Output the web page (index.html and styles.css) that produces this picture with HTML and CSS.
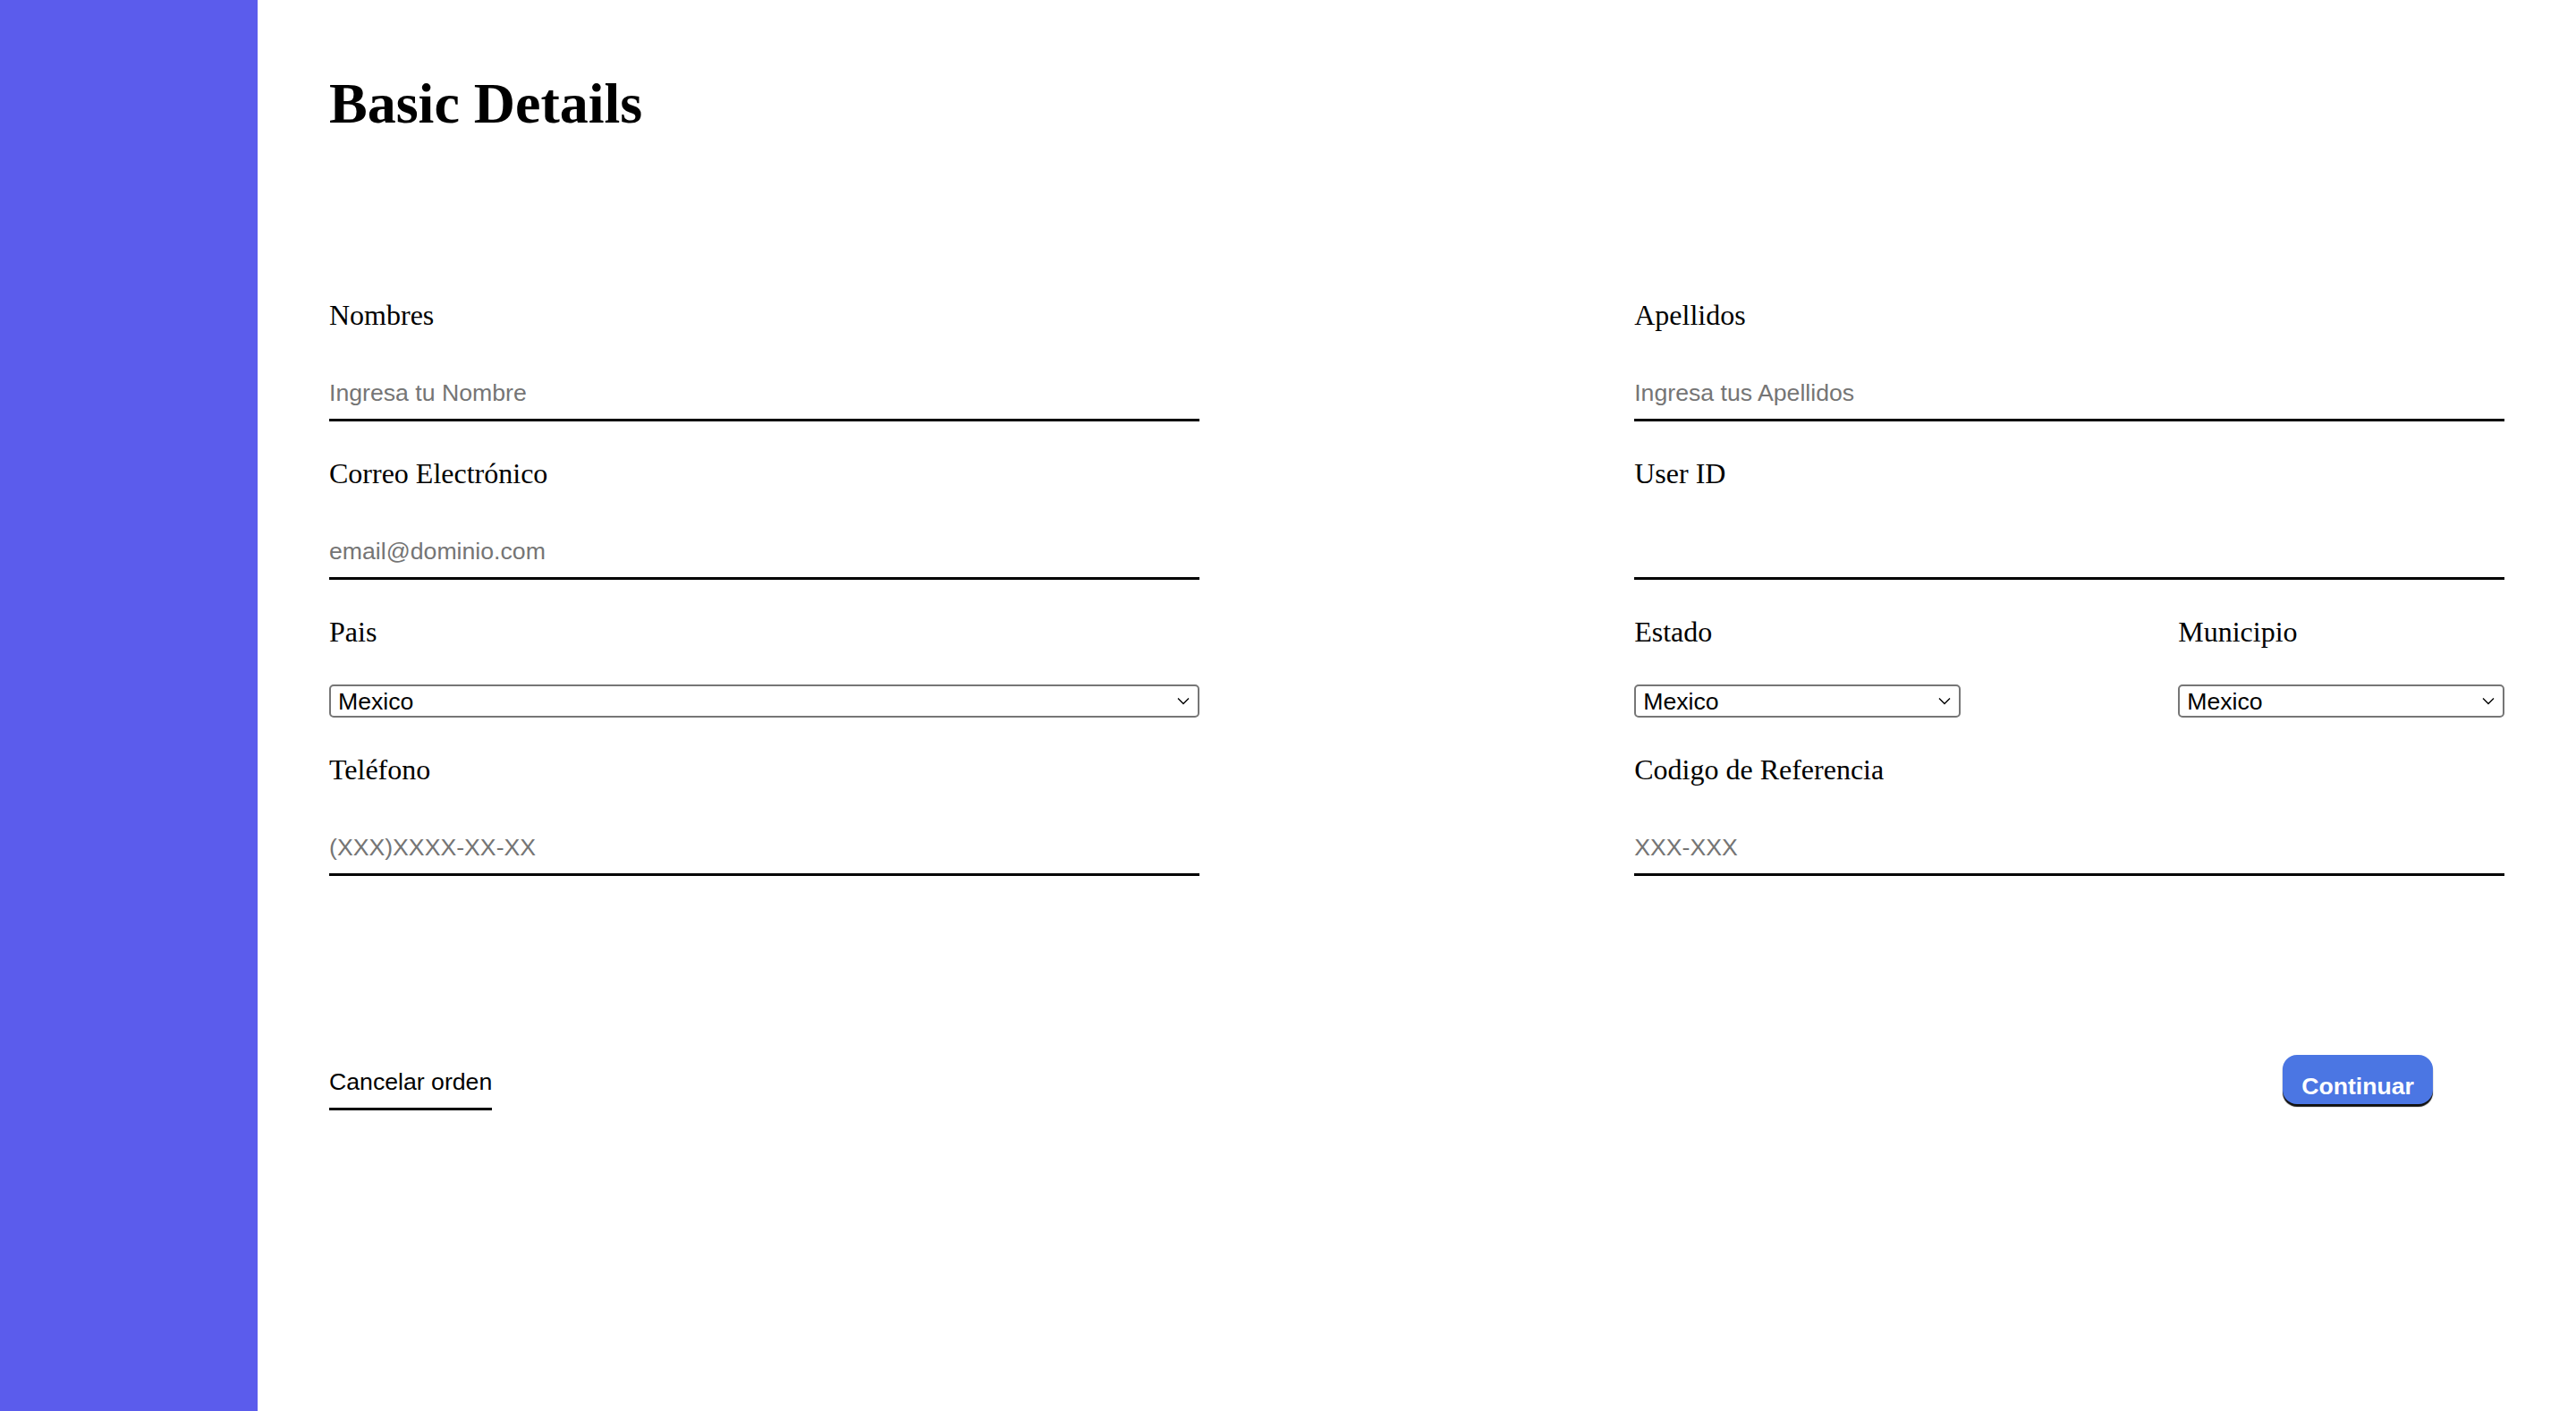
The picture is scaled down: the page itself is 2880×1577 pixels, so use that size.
FILE: index.html
```html
<!DOCTYPE html>
<html lang="es">
<head>
<meta charset="utf-8">
<title>Basic Details</title>
<link rel="stylesheet" href="styles.css">
</head>
<body>
  <aside class="sidebar"></aside>
  <main class="main">
    <h1 class="title">Basic Details</h1>
    <form class="form">
      <div class="field">
        <label class="label" for="nombres">Nombres</label>
        <input class="input" id="nombres" type="text" placeholder="Ingresa tu Nombre">
      </div>
      <div class="field">
        <label class="label" for="apellidos">Apellidos</label>
        <input class="input" id="apellidos" type="text" placeholder="Ingresa tus Apellidos">
      </div>
      <div class="field">
        <label class="label" for="correo">Correo Electrónico</label>
        <input class="input" id="correo" type="email" placeholder="email@dominio.com">
      </div>
      <div class="field">
        <label class="label" for="userid">User ID</label>
        <input class="input" id="userid" type="text">
      </div>
      <div class="field">
        <label class="label" for="pais">Pais</label>
        <div class="select-wrap">
          <select class="select" id="pais"><option>Mexico</option></select>
          <svg class="chevron" viewBox="0 0 14 9" aria-hidden="true"><path d="M1 1.5 L7 7.5 L13 1.5" fill="none" stroke="#000" stroke-width="1.4"/></svg>
        </div>
      </div>
      <div class="split">
        <div class="field field-small">
          <label class="label" for="estado">Estado</label>
          <div class="select-wrap">
            <select class="select" id="estado"><option>Mexico</option></select>
            <svg class="chevron" viewBox="0 0 14 9" aria-hidden="true"><path d="M1 1.5 L7 7.5 L13 1.5" fill="none" stroke="#000" stroke-width="1.4"/></svg>
          </div>
        </div>
        <div class="field field-small">
          <label class="label" for="municipio">Municipio</label>
          <div class="select-wrap">
            <select class="select" id="municipio"><option>Mexico</option></select>
            <svg class="chevron" viewBox="0 0 14 9" aria-hidden="true"><path d="M1 1.5 L7 7.5 L13 1.5" fill="none" stroke="#000" stroke-width="1.4"/></svg>
          </div>
        </div>
      </div>
      <div class="field">
        <label class="label" for="telefono">Teléfono</label>
        <input class="input" id="telefono" type="tel" placeholder="(XXX)XXXX-XX-XX">
      </div>
      <div class="field">
        <label class="label" for="codigo">Codigo de Referencia</label>
        <input class="input" id="codigo" type="text" placeholder="XXX-XXX">
      </div>
    </form>
    <div class="actions">
      <button class="btn-cancel" type="button">Cancelar orden</button>
      <button class="btn-continue" type="button">Continuar</button>
    </div>
  </main>
</body>
</html>
```

FILE: styles.css
```css
* {
  box-sizing: border-box;
}

html, body {
  margin: 0;
  padding: 0;
  height: 100%;
  background: #ffffff;
}

body {
  display: flex;
  min-height: 1577px;
  font-family: "Liberation Serif", "Times New Roman", serif;
  color: #000;
}

.sidebar {
  width: 288px;
  flex: 0 0 288px;
  background: #5b5cec;
}

.main {
  flex: 1;
  padding: 79px 80px 0 80px;
}

.title {
  margin: 0 0 181px 0;
  font-size: 64px;
  font-weight: bold;
  line-height: normal;
}

.form {
  display: grid;
  grid-template-columns: 40% 40%;
  justify-content: space-between;
  row-gap: 40px;
}

.field {
  display: flex;
  flex-direction: column;
}

.label {
  font-size: 32px;
  line-height: normal;
  margin-bottom: 40px;
}

.input {
  width: 100%;
  border: none;
  border-bottom: 3px solid #000;
  outline: none;
  background: transparent;
  padding: 13px 0 13px 0;
  font-family: "Liberation Sans", Arial, sans-serif;
  font-size: 26.67px;
  line-height: normal;
  color: #000;
}

.input::placeholder {
  color: #757575;
}

.select-wrap {
  position: relative;
  width: 100%;
}

.select {
  display: block;
  width: 100%;
  height: 37px;
  border: 2px solid #767676;
  border-radius: 5px;
  background: #fff;
  padding: 0 40px 0 8px;
  font-family: "Liberation Sans", Arial, sans-serif;
  font-size: 26.67px;
  color: #000;
  -webkit-appearance: none;
  appearance: none;
}

.chevron {
  position: absolute;
  right: 11px;
  top: 14px;
  width: 14px;
  height: 9px;
  pointer-events: none;
}

.split {
  display: flex;
  justify-content: space-between;
}

.field-small {
  width: 37.5%;
}

.actions {
  margin-top: 200px;
  display: flex;
  justify-content: space-between;
  align-items: flex-end;
}

.btn-cancel {
  background: none;
  border: none;
  border-bottom: 3px solid #000;
  padding: 0 0 13px 0;
  font-family: "Liberation Sans", Arial, sans-serif;
  font-size: 26.67px;
  line-height: normal;
  color: #000;
  cursor: pointer;
}

.btn-continue {
  margin: 0 80px 7px 0;
  background: #4b76e3;
  border: none;
  border-radius: 16px;
  padding: 20px 21px 4px 21px;
  font-family: "Liberation Sans", Arial, sans-serif;
  font-size: 26.67px;
  font-weight: bold;
  line-height: normal;
  color: #fff;
  box-shadow: 0 3px 1px #111;
  cursor: pointer;
}
```
